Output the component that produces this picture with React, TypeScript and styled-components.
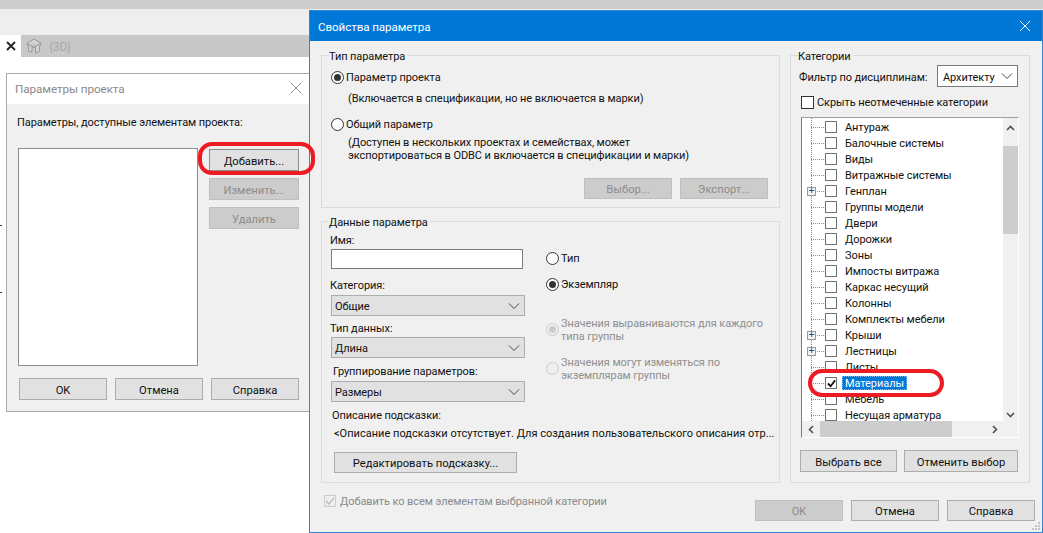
import styled, { createGlobalStyle, css } from "styled-components";

const FONT = `Roboto, "Noto Sans", "Liberation Sans", sans-serif`;

// Roboto sits a pixel higher than the reference font in the same line box
const baselineFix = css`
  padding-top: 1px;
  margin-bottom: -1px;
`;

const GlobalStyle = createGlobalStyle`
  html, body {
    margin: 0;
    padding: 0;
    background: #ffffff;
  }
  body {
    font-family: ${FONT};
    font-size: 11px;
    letter-spacing: -0.08px;
    color: #111111;
  }
  * {
    box-sizing: border-box;
  }
`;

const Desktop = styled.div`
  position: relative;
  width: 1043px;
  height: 533px;
  overflow: hidden;
  background: #ffffff;
`;

const TopBar = styled.div`
  height: 9px;
  background: #cccccc;
`;

const Ribbon = styled.div`
  height: 26px;
  background: #eeeeee;
`;

const TabStrip = styled.div`
  display: flex;
  height: 22px;
  background: #c8c8c8;
`;

const ActiveTab = styled.div`
  display: flex;
  align-items: center;
  justify-content: center;
  width: 21px;
  padding-left: 1px;
  background: #ffffff;
`;

const ViewTab = styled.div`
  display: flex;
  align-items: center;
  gap: 7px;
  padding-left: 5px;
  font-size: 12px;
  letter-spacing: -0.2px;
  color: #a8a8a8;
`;

const ViewName = styled.span`
  padding-top: 2px;
`;

const Tick = styled.div<{ $top: number }>`
  position: absolute;
  left: 0;
  top: ${(p) => p.$top}px;
  width: 2px;
  height: 1px;
  background: #333333;
`;

const ProjectDialog = styled.div`
  position: absolute;
  left: 6px;
  top: 73px;
  width: 320px;
  height: 339px;
  border: 1px solid #a9a9a9;
  background: #f0f0f0;
`;

const LightTitle = styled.div`
  display: flex;
  align-items: center;
  height: 30px;
  padding-left: 8px;
  background: #ffffff;
  font-size: 11.7px;
  color: #8a8a8a;
`;

const DialogX = styled.svg`
  position: absolute;
  left: 283px;
  top: 8px;
`;

const ProjectBody = styled.div`
  padding: 11px 0 0 11px;
  width: 303px;
`;

const ProjectLabel = styled.div`
  ${baselineFix}
  line-height: 14px;
  margin-left: -1px;
  margin-bottom: 18px;
`;

const ProjectMiddle = styled.div`
  display: flex;
  align-items: flex-start;
`;

const ListBox = styled.div`
  width: 180px;
  height: 218px;
  background: #ffffff;
  border: 1px solid #8b8b93;
`;

const SideButtons = styled.div`
  display: flex;
  flex-direction: column;
  gap: 7px;
  margin: 1px 0 0 11px;
`;

const ProjectFooter = styled.div`
  display: flex;
  gap: 8px;
  margin: 12px 0 0 1px;
`;

const Button = styled.button<{ $w?: number; $h?: number; $off?: boolean; $strong?: boolean }>`
  display: block;
  width: ${(p) => p.$w ?? 88}px;
  height: ${(p) => p.$h ?? 22}px;
  padding: 2px 0 0;
  font-family: ${FONT};
  font-size: 11.2px;
  letter-spacing: 0;
  background: ${(p) => (p.$off ? "#cccccc" : "#e1e1e1")};
  color: ${(p) => (p.$off ? "#8c8c8c" : "#111111")};
  border: 1px solid ${(p) => (p.$off ? "#bfbfbf" : p.$strong ? "#8e8e8e" : "#adadad")};
`;

const MainWindow = styled.div`
  position: absolute;
  left: 309px;
  top: 10px;
  width: 734px;
  height: 523px;
  border: 1px solid #2f86d6;
  background: #f0f0f0;
`;

const BlueTitle = styled.div`
  display: flex;
  align-items: center;
  justify-content: space-between;
  height: 30px;
  padding: 0 11px 0 8px;
  background: #0078d7;
  color: #ffffff;
  font-size: 11.6px;
`;

const BlueTitleText = styled.span`
  ${baselineFix}
`;

const MainBody = styled.div`
  display: flex;
  gap: 10px;
  padding: 14px 0 0 11px;
`;

const LeftColumn = styled.div`
  display: flex;
  flex-direction: column;
  width: 459px;
`;

const Group = styled.div<{ $h: number; $w?: number; $top?: number }>`
  position: relative;
  width: ${(p) => p.$w ?? 459}px;
  height: ${(p) => p.$h}px;
  margin-top: ${(p) => p.$top ?? 0}px;
  border: 1px solid #dcdcdc;
`;

const Legend = styled.span`
  position: absolute;
  left: 7px;
  top: -7px;
  height: 14px;
  padding: 1px 2px 0 0;
  line-height: 14px;
  background: #f0f0f0;
`;

const TypeInner = styled.div`
  padding: 14px 11px 0 9px;
`;

const RadioRow = styled.div<{ $top?: number; $faded?: boolean }>`
  display: flex;
  align-items: center;
  gap: 2px;
  margin-top: ${(p) => p.$top ?? 0}px;
  line-height: 14px;
  color: ${(p) => (p.$faded ? "#8f8f8f" : "inherit")};
`;

const RadioMark = styled.span<{ $on?: boolean; $off?: boolean }>`
  display: flex;
  align-items: center;
  justify-content: center;
  flex: none;
  width: 13px;
  height: 13px;
  border-radius: 50%;
  background: ${(p) => (p.$off ? "#eeeeee" : "#ffffff")};
  border: 1px solid ${(p) => (p.$off ? "#cccccc" : "#333333")};

  &::after {
    content: "";
    display: ${(p) => (p.$on ? "block" : "none")};
    width: 7px;
    height: 7px;
    border-radius: 50%;
    background: ${(p) => (p.$off ? "#cccccc" : "#333333")};
  }
`;

const RowText = styled.span`
  ${baselineFix}
`;

const Hint = styled.div<{ $top: number }>`
  ${baselineFix}
  margin: ${(p) => p.$top}px 0 -1px 17px;
  line-height: 13px;
`;

const TypeButtons = styled.div`
  display: flex;
  justify-content: flex-end;
  gap: 8px;
  margin-top: 17px;
`;

const DataInner = styled.div`
  display: flex;
  flex-direction: column;
  padding: 11px 0 0 9px;
`;

const DataColumns = styled.div`
  display: flex;
`;

const Fields = styled.div`
  display: flex;
  flex-direction: column;
  flex: none;
  width: 215px;
`;

const FieldLabel = styled.div<{ $top?: number; $left?: number; $gap?: number }>`
  margin: ${(p) => p.$top ?? 0}px 0 ${(p) => p.$gap ?? 3}px ${(p) => p.$left ?? -1}px;
  line-height: 16px;
  height: 14px;
`;

const TextInput = styled.div`
  width: 192px;
  height: 20px;
  background: #ffffff;
  border: 1px solid #7a7a7a;
`;

const Select = styled.div<{ $w?: number; $white?: boolean; $h?: number }>`
  display: flex;
  align-items: center;
  justify-content: space-between;
  flex: none;
  width: ${(p) => p.$w ?? 194}px;
  height: ${(p) => p.$h ?? 21}px;
  padding: 0 1px 0 ${(p) => (p.$white ? 5 : 3)}px;
  white-space: nowrap;
  background: ${(p) => (p.$white ? "#ffffff" : "#e1e1e1")};
  border: 1px solid ${(p) => (p.$white ? "#7a7a7a" : "#adadad")};
`;

const Chevron = styled.svg`
  flex: none;
  width: 17px;
  height: 8px;
`;

const Options = styled.div`
  display: flex;
  flex-direction: column;
  padding-top: 18px;
`;

const FadedText = styled.div`
  ${baselineFix}
  line-height: 13px;
`;

const DescLabel = styled.div`
  ${baselineFix}
  margin: 6px 0 -1px 1px;
  line-height: 14px;
`;

const DescText = styled.div`
  ${baselineFix}
  margin: 4px 0 -1px 3px;
  line-height: 14px;
  letter-spacing: 0.02px;
  white-space: nowrap;
`;

const EditButtonSlot = styled.div`
  margin: 12px 0 0 3px;
`;

const AddAllRow = styled.div`
  display: flex;
  align-items: center;
  gap: 4px;
  padding-left: 3px;
  margin-top: 11px;
  color: #8a8a8a;
  line-height: 14px;
`;

const CheckMark = styled.span<{ $size?: number; $off?: boolean; $dark?: boolean }>`
  display: flex;
  align-items: center;
  justify-content: center;
  flex: none;
  width: ${(p) => p.$size ?? 12}px;
  height: ${(p) => p.$size ?? 12}px;
  background: ${(p) => (p.$off ? "#eeeeee" : "#ffffff")};
  border: 1px solid ${(p) => (p.$off ? "#cccccc" : p.$dark ? "#333333" : "#6f6f6f")};
`;

const RightColumn = styled.div`
  display: flex;
  flex-direction: column;
`;

const CategoryInner = styled.div`
  display: flex;
  flex-direction: column;
  padding: 9px 0 0 8px;
`;

const FilterRow = styled.div`
  display: flex;
  align-items: center;
  justify-content: space-between;
  width: 219px;
  white-space: nowrap;
`;

const HideRow = styled.div`
  display: flex;
  align-items: center;
  gap: 3px;
  margin: 8px 0 0 2px;
  line-height: 14px;
`;

const Tree = styled.div`
  position: relative;
  width: 218px;
  height: 321px;
  margin: 8px 0 0 2px;
  overflow: hidden;
  background: #ffffff;
  border-style: solid;
  border-width: 1px;
  border-color: #a0a0a0 #ffffff #ffffff #7a7a7a;
`;

const TreeRows = styled.div`
  padding: 1px 0 0 5px;
  background-image: linear-gradient(to bottom, #8a8a8a 50%, transparent 50%);
  background-size: 1px 2px;
  background-repeat: repeat-y;
  background-position: 9px 0;
`;

const TreeRow = styled.div`
  display: flex;
  align-items: center;
  height: 16px;
  white-space: nowrap;
`;

const Expander = styled.span`
  display: flex;
  align-items: center;
  flex: none;
  width: 18px;
  height: 16px;
  background-image: repeating-linear-gradient(to right, #8a8a8a 0 1px, transparent 1px 2px);
  background-size: 14px 1px;
  background-repeat: no-repeat;
  background-position: 4px 8px;
`;

const PlusBox = styled.span`
  display: flex;
  align-items: center;
  justify-content: center;
  width: 9px;
  height: 9px;
  font-family: "Liberation Mono", monospace;
  font-size: 10px;
  line-height: 9px;
  color: #2b3f8f;
  background: #f4f4f4;
  border: 1px solid #9a9a9a;
`;

const TreeLabel = styled.span<{ $selected?: boolean }>`
  margin-left: ${(p) => (p.$selected ? "5px" : "8px")};
  padding: ${(p) => (p.$selected ? "0 3px" : "0")};
  height: 14px;
  line-height: 16px;
  background: ${(p) => (p.$selected ? "#0078d7" : "transparent")};
  color: ${(p) => (p.$selected ? "#ffffff" : "inherit")};
  outline: ${(p) => (p.$selected ? "1px dotted #7fbdf0" : "none")};
  outline-offset: -1px;
`;

const VScroll = styled.div`
  position: absolute;
  right: 0;
  top: 0;
  bottom: 16px;
  width: 15px;
  background: #f0f0f0;
`;

const VThumb = styled.div`
  position: absolute;
  left: 0;
  top: 28px;
  width: 15px;
  height: 88px;
  background: #cdcdcd;
`;

const HScroll = styled.div`
  position: absolute;
  left: 0;
  right: 0;
  bottom: 0;
  height: 16px;
  background: #f0f0f0;
`;

const HThumb = styled.div`
  position: absolute;
  left: 18px;
  top: 0;
  width: 132px;
  height: 16px;
  background: #cdcdcd;
`;

const ScrollArrow = styled.svg<{ $x: number; $y: number }>`
  position: absolute;
  left: ${(p) => p.$x}px;
  top: ${(p) => p.$y}px;
`;

const CategoryButtons = styled.div`
  display: flex;
  gap: 7px;
  margin: 12px 0 0 1px;
`;

const MainFooter = styled.div`
  position: absolute;
  right: 7px;
  bottom: 11px;
  display: flex;
  gap: 8px;
`;

const Grip = styled.svg`
  position: absolute;
  right: 1px;
  bottom: 1px;
`;

const RedMark = styled.div<{ $x: number; $y: number; $w: number; $h: number }>`
  position: absolute;
  left: ${(p) => p.$x}px;
  top: ${(p) => p.$y}px;
  width: ${(p) => p.$w}px;
  height: ${(p) => p.$h}px;
  border: 4px solid #ed1c24;
  border-radius: 14px;
`;

const CATEGORIES: { name: string; plus?: boolean; checked?: boolean }[] = [
  { name: "Антураж" },
  { name: "Балочные системы" },
  { name: "Виды" },
  { name: "Витражные системы" },
  { name: "Генплан", plus: true },
  { name: "Группы модели" },
  { name: "Двери" },
  { name: "Дорожки" },
  { name: "Зоны" },
  { name: "Импосты витража" },
  { name: "Каркас несущий" },
  { name: "Колонны" },
  { name: "Комплекты мебели" },
  { name: "Крыши", plus: true },
  { name: "Лестницы", plus: true },
  { name: "Листы" },
  { name: "Материалы", checked: true },
  { name: "Мебель" },
  { name: "Несущая арматура" },
];

function Down() {
  return (
    <Chevron viewBox="0 0 17 8">
      <path d="M3 1.5 L8 6.5 L13 1.5" fill="none" stroke="#444" strokeWidth="1" />
    </Chevron>
  );
}

function Tick2({ color = "#111", width = 2, size = 9 }: { color?: string; width?: number; size?: number }) {
  return (
    <svg width={size} height={size} viewBox="0 0 10 10">
      <path d="M1 5 L4 8 L9 1.5" fill="none" stroke={color} strokeWidth={width} />
    </svg>
  );
}

export default function App() {
  return (
    <Desktop>
      <GlobalStyle />
      <TopBar />
      <Ribbon />
      <TabStrip>
        <ActiveTab>
          <svg width="10" height="10" viewBox="0 0 10 10">
            <path d="M1 1 L9 9 M9 1 L1 9" stroke="#222" strokeWidth="1.8" />
          </svg>
        </ActiveTab>
        <ViewTab>
          <svg width="16" height="16" viewBox="0 0 16 16">
            <path
              d="M1 5.5 L8 1 L15 5.5 L15 7 L13.5 8 L13.5 13.5 L9.5 15 L9.5 9.5 L6 8.5 L6 14 L2.5 13 L2.5 7.5 L1 6.5 Z M1 5.5 L8 9.5 L15 5.5"
              fill="#d4d4d4"
              stroke="#979797"
            />
          </svg>
          <ViewName>{"{3D}"}</ViewName>
        </ViewTab>
      </TabStrip>
      <Tick $top={225} />
      <Tick $top={292} />

      <ProjectDialog>
        <LightTitle>Параметры проекта</LightTitle>
        <DialogX width="12" height="12" viewBox="0 0 12 12">
          <path d="M1 1 L11 11 M11 1 L1 11" stroke="#8a8a8a" strokeWidth="1" />
        </DialogX>
        <ProjectBody>
          <ProjectLabel>Параметры, доступные элементам проекта:</ProjectLabel>
          <ProjectMiddle>
            <ListBox />
            <SideButtons>
              <Button $w={90} $strong>
                Добавить...
              </Button>
              <Button $w={90} $off>
                Изменить...
              </Button>
              <Button $w={90} $off>
                Удалить
              </Button>
            </SideButtons>
          </ProjectMiddle>
          <ProjectFooter>
            <Button>OK</Button>
            <Button>Отмена</Button>
            <Button>Справка</Button>
          </ProjectFooter>
        </ProjectBody>
      </ProjectDialog>

      <MainWindow>
        <BlueTitle>
          <BlueTitleText>Свойства параметра</BlueTitleText>
          <svg width="12" height="12" viewBox="0 0 12 12">
            <path d="M1 1 L11 11 M11 1 L1 11" stroke="#ffffff" strokeWidth="1" />
          </svg>
        </BlueTitle>
        <MainBody>
          <LeftColumn>
            <Group $h={153}>
              <Legend>Тип параметра</Legend>
              <TypeInner>
                <RadioRow>
                  <RadioMark $on />
                  <RowText>Параметр проекта</RowText>
                </RadioRow>
                <Hint $top={7}>(Включается в спецификации, но не включается в марки)</Hint>
                <RadioRow $top={13}>
                  <RadioMark />
                  <RowText>Общий параметр</RowText>
                </RadioRow>
                <Hint $top={4}>
                  (Доступен в нескольких проектах и семействах, может
                  <br />
                  экспортироваться в ODBC и включается в спецификации и марки)
                </Hint>
                <TypeButtons>
                  <Button $off $h={21}>
                    Выбор...
                  </Button>
                  <Button $off $h={21}>
                    Экспорт...
                  </Button>
                </TypeButtons>
              </TypeInner>
            </Group>
            <Group $h={262} $top={13}>
              <Legend>Данные параметра</Legend>
              <DataInner>
                <DataColumns>
                  <Fields>
                    <FieldLabel $gap={2}>Имя:</FieldLabel>
                    <TextInput />
                    <FieldLabel $top={9}>Категория:</FieldLabel>
                    <Select>
                      <RowText>Общие</RowText>
                      <Down />
                    </Select>
                    <FieldLabel $top={5} $gap={2}>
                      Тип данных:
                    </FieldLabel>
                    <Select>
                      <RowText>Длина</RowText>
                      <Down />
                    </Select>
                    <FieldLabel $top={6} $left={2}>
                      Группирование параметров:
                    </FieldLabel>
                    <Select>
                      <RowText>Размеры</RowText>
                      <Down />
                    </Select>
                  </Fields>
                  <Options>
                    <RadioRow>
                      <RadioMark />
                      <RowText>Тип</RowText>
                    </RadioRow>
                    <RadioRow $top={12}>
                      <RadioMark $on />
                      <RowText>Экземпляр</RowText>
                    </RadioRow>
                    <RadioRow $top={25} $faded>
                      <RadioMark $on $off />
                      <FadedText>
                        Значения выравниваются для каждого
                        <br />
                        типа группы
                      </FadedText>
                    </RadioRow>
                    <RadioRow $top={13} $faded>
                      <RadioMark $off />
                      <FadedText>
                        Значения могут изменяться по
                        <br />
                        экземплярам группы
                      </FadedText>
                    </RadioRow>
                  </Options>
                </DataColumns>
                <DescLabel>Описание подсказки:</DescLabel>
                <DescText>
                  &lt;Описание подсказки отсутствует. Для создания пользовательского описания отр...
                </DescText>
                <EditButtonSlot>
                  <Button $w={183} $h={21}>
                    Редактировать подсказку...
                  </Button>
                </EditButtonSlot>
              </DataInner>
            </Group>
            <AddAllRow>
              <CheckMark $off>
                <Tick2 color="#b5b5b5" width={1.2} size={10} />
              </CheckMark>
              <RowText>Добавить ко всем элементам выбранной категории</RowText>
            </AddAllRow>
          </LeftColumn>
          <RightColumn>
            <Group $h={428} $w={240}>
              <Legend>Категории</Legend>
              <CategoryInner>
                <FilterRow>
                  <RowText>Фильтр по дисциплинам:</RowText>
                  <Select $w={81} $h={22} $white>
                    <RowText>Архитекту</RowText>
                    <Down />
                  </Select>
                </FilterRow>
                <HideRow>
                  <CheckMark $size={13} $dark />
                  <RowText>Скрыть неотмеченные категории</RowText>
                </HideRow>
                <Tree>
                  <TreeRows>
                    {CATEGORIES.map((c) => (
                      <TreeRow key={c.name}>
                        <Expander>{c.plus && <PlusBox>+</PlusBox>}</Expander>
                        <CheckMark>{c.checked && <Tick2 />}</CheckMark>
                        <TreeLabel $selected={c.checked}>{c.name}</TreeLabel>
                      </TreeRow>
                    ))}
                  </TreeRows>
                  <VScroll>
                    <ScrollArrow $x={3} $y={7} width="9" height="6" viewBox="0 0 9 6">
                      <path d="M1 5 L4.5 1.5 L8 5" fill="none" stroke="#505050" strokeWidth="1.6" />
                    </ScrollArrow>
                    <VThumb />
                    <ScrollArrow $x={3} $y={294} width="9" height="6" viewBox="0 0 9 6">
                      <path d="M1 1 L4.5 4.5 L8 1" fill="none" stroke="#505050" strokeWidth="1.6" />
                    </ScrollArrow>
                  </VScroll>
                  <HScroll>
                    <ScrollArrow $x={6} $y={4} width="6" height="9" viewBox="0 0 6 9">
                      <path d="M5 1 L1.5 4.5 L5 8" fill="none" stroke="#505050" strokeWidth="1.6" />
                    </ScrollArrow>
                    <HThumb />
                    <ScrollArrow $x={190} $y={4} width="6" height="9" viewBox="0 0 6 9">
                      <path d="M1 1 L4.5 4.5 L1 8" fill="none" stroke="#505050" strokeWidth="1.6" />
                    </ScrollArrow>
                  </HScroll>
                </Tree>
                <CategoryButtons>
                  <Button $w={97}>Выбрать все</Button>
                  <Button $w={114}>Отменить выбор</Button>
                </CategoryButtons>
              </CategoryInner>
            </Group>
          </RightColumn>
        </MainBody>
        <MainFooter>
          <Button $off $h={21}>
            OK
          </Button>
          <Button $h={21}>Отмена</Button>
          <Button $h={21}>Справка</Button>
        </MainFooter>
        <Grip width="10" height="10" viewBox="0 0 10 10">
          <path d="M7 1h2v2h-2z M4 4h2v2h-2z M7 4h2v2h-2z M1 7h2v2h-2z M4 7h2v2h-2z M7 7h2v2h-2z" fill="#c4c4c4" />
        </Grip>
      </MainWindow>

      <RedMark $x={198} $y={142} $w={117} $h={33} />
      <RedMark $x={808} $y={369} $w={136} $h={28} />
    </Desktop>
  );
}
